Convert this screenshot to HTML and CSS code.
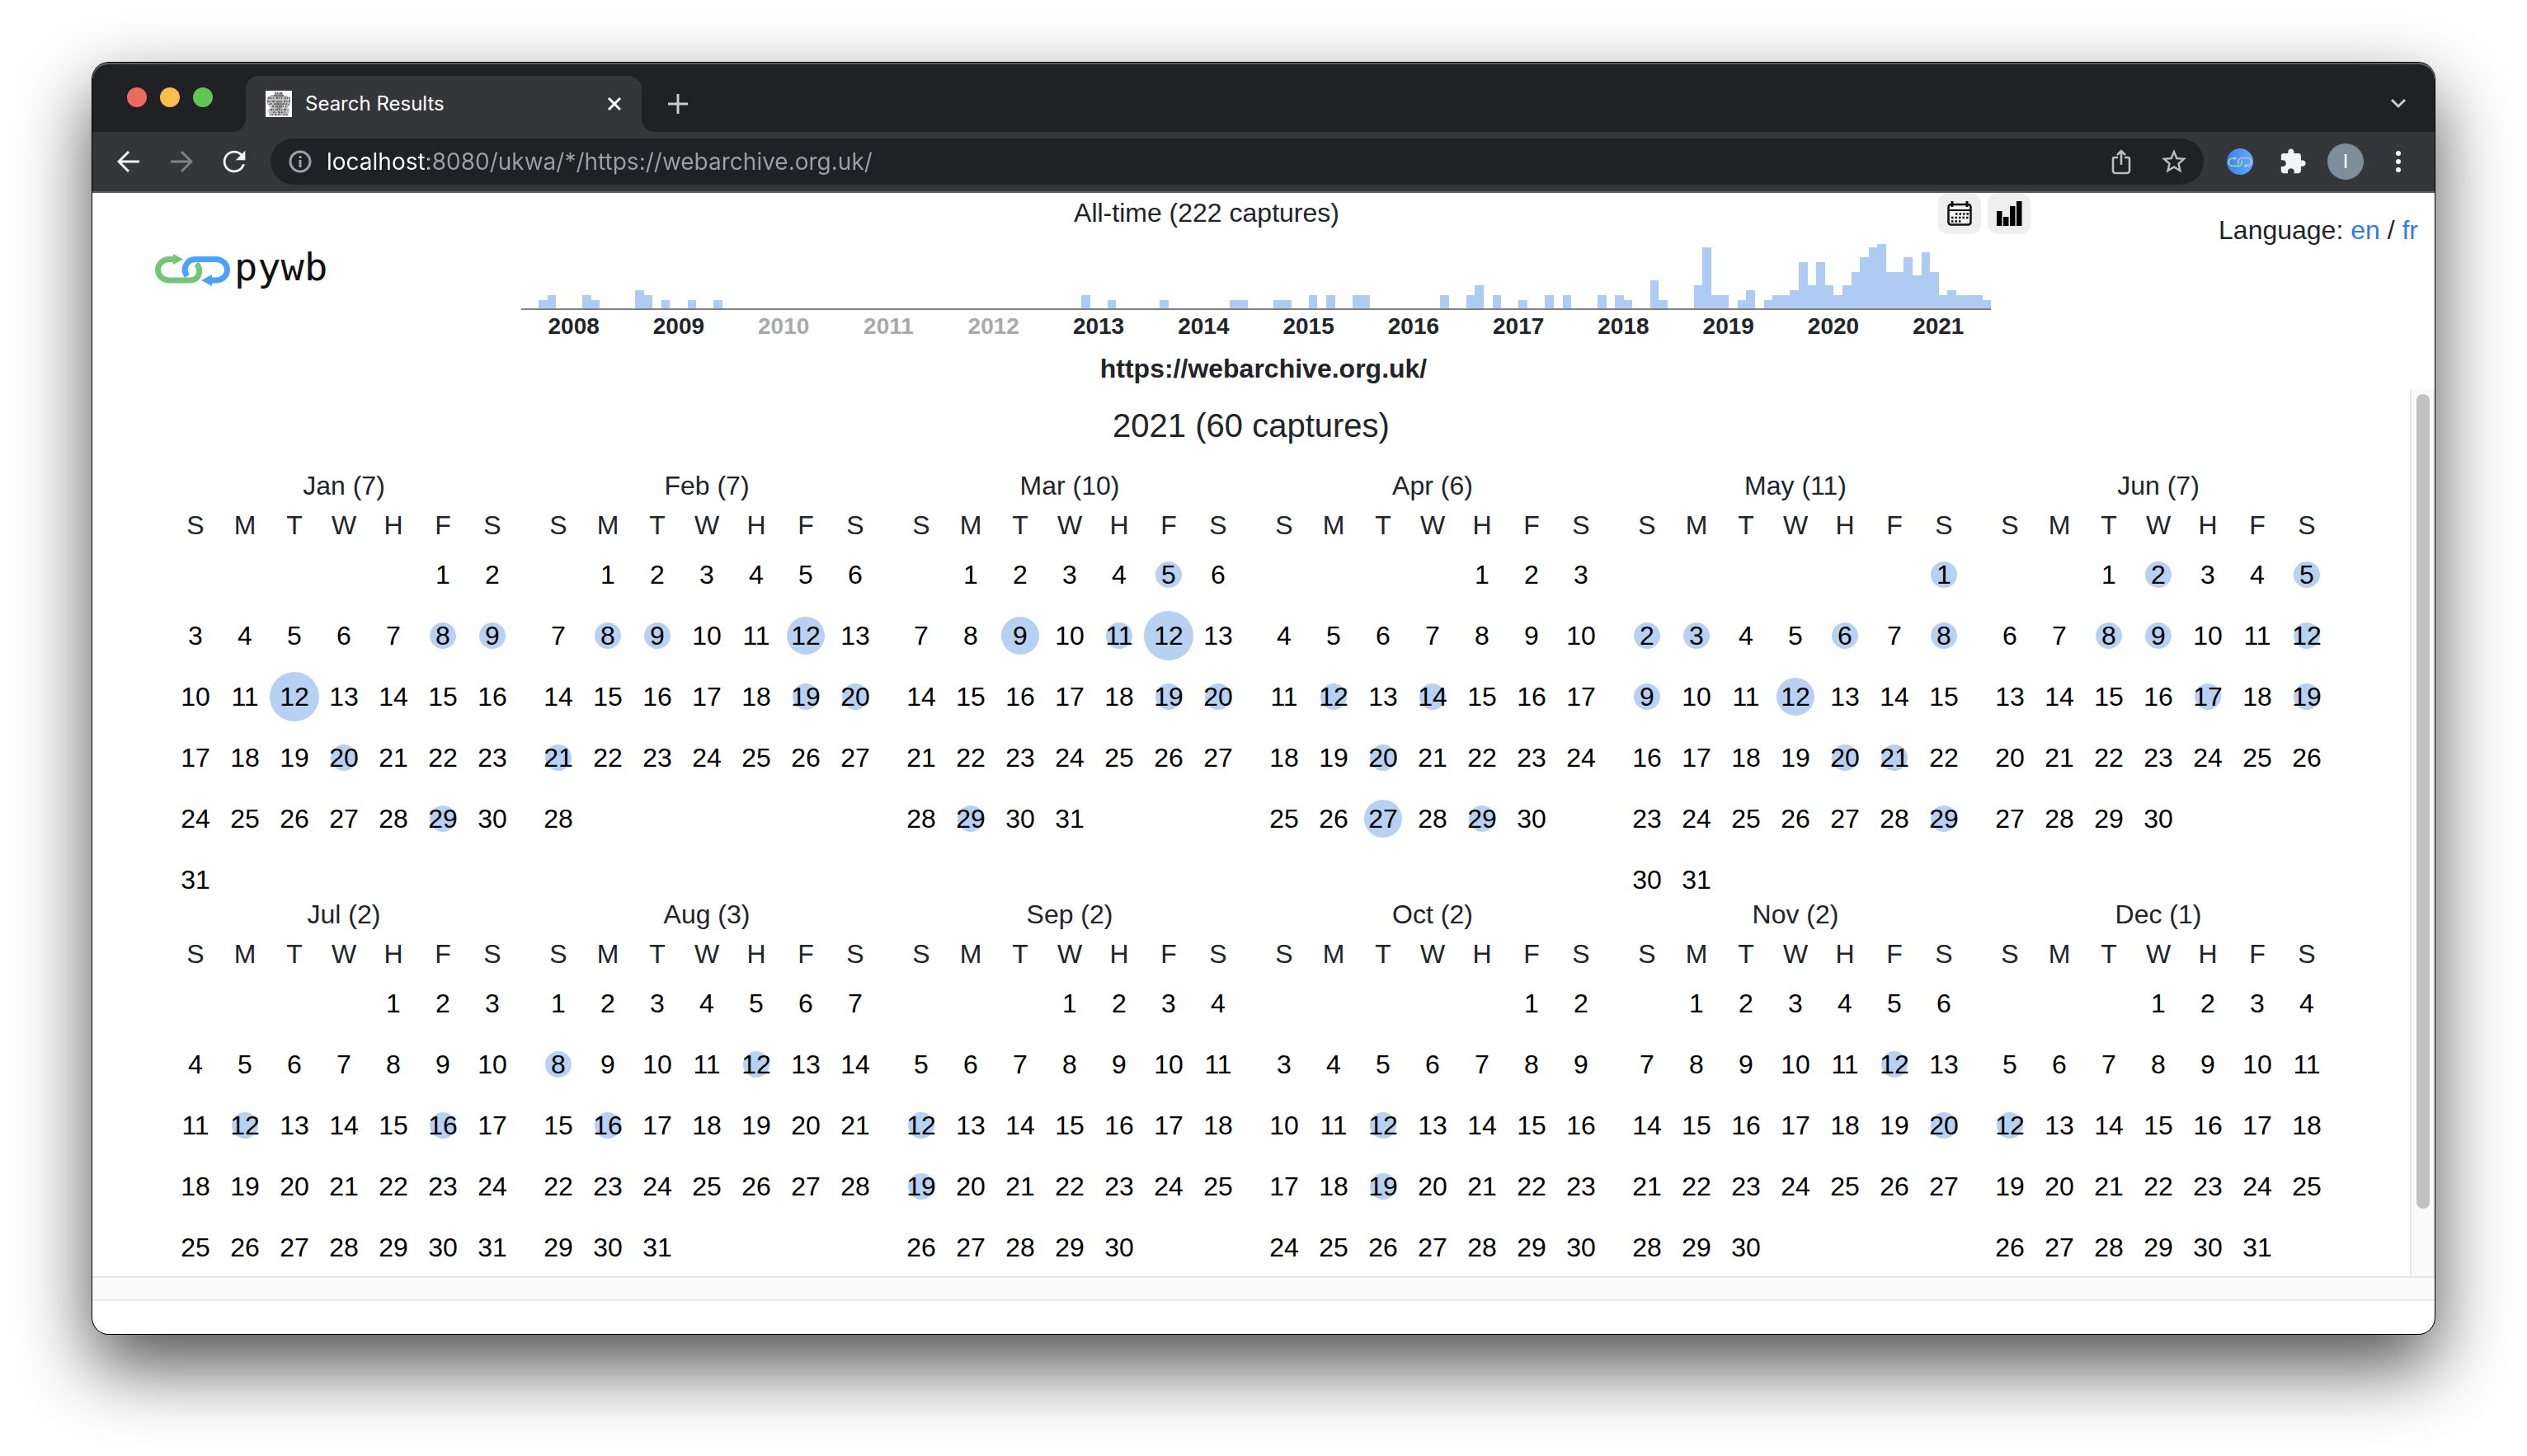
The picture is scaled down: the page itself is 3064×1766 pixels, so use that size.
FILE: index.html
```html
<!DOCTYPE html>
<html lang="en">
<head>
<meta charset="utf-8">
<title>Search Results</title>
<link rel="stylesheet" href="styles.css">
</head>
<body>
<div class="window">
  <header class="tabstrip">
    <div class="lights">
      <button class="light light-close" aria-label="Close window"></button>
      <button class="light light-min" aria-label="Minimise window"></button>
      <button class="light light-max" aria-label="Zoom window"></button>
    </div>
    <div class="tab">
      <svg class="favicon" viewBox="0 0 32 32" aria-hidden="true">
        <rect width="32" height="32" fill="#fff"/>
        <path fill="#b4b4b4" d="M11 2h10v4h5l4 3v8l-3 3 2 4-2 6H5l-2-6 3-4-4-4V8l5-3h4z"/>
        <g stroke="#666" stroke-width="2" stroke-dasharray="2 1 1 2 3 1" fill="none">
          <path d="M11 3h10M10 6h12M3 9h7M13 9h7M23 9h7M2 13h9M22 13h8M4 16h24M8 19h17M6 23h20M9 26h15M5 29h23"/>
        </g>
        <g stroke="#eee" stroke-width="1" stroke-dasharray="2 3 1 2" fill="none">
          <path d="M4 11h25M3 15h26M6 18h21M5 21h23M4 25h24M5 28h22"/>
        </g>
        <path fill="#777" d="M12 4h8v4h-8zM12 12h8v8l-4 3-4-3z" opacity=".7"/>
      </svg>
      <span class="tab-title">Search Results</span>
      <button class="icon-btn tab-close" aria-label="Close tab">
        <svg width="18" height="18" viewBox="0 0 18 18"><path d="M2 2l14 14M16 2L2 16" stroke="#fff" stroke-width="3"/></svg>
      </button>
    </div>
    <button class="icon-btn new-tab" aria-label="New tab">
      <svg width="26" height="26" viewBox="0 0 26 26"><path d="M13 1v24M1 13h24" stroke="#c8cacd" stroke-width="3"/></svg>
    </button>
    <button class="icon-btn tab-search" aria-label="Search tabs">
      <svg width="20" height="14" viewBox="0 0 20 14"><path d="M2 2l8 8 8-8" fill="none" stroke="#c8cacd" stroke-width="3"/></svg>
    </button>
  </header>

  <nav class="toolbar" aria-label="Browser toolbar">
    <button class="icon-btn" aria-label="Back">
      <svg width="28" height="28" viewBox="0 0 28 28"><path d="M27 14H3M14 2L2 14l12 12" fill="none" stroke="#f1f3f4" stroke-width="3"/></svg>
    </button>
    <button class="icon-btn" aria-label="Forward">
      <svg width="28" height="28" viewBox="0 0 28 28"><path d="M1 14h24M14 2l12 12-12 12" fill="none" stroke="#808185" stroke-width="3"/></svg>
    </button>
    <button class="icon-btn" aria-label="Reload">
      <svg width="40" height="40" viewBox="0 0 24 24"><path fill="#f1f3f4" d="M17.65 6.35C16.2 4.9 14.21 4 12 4c-4.42 0-7.99 3.58-7.99 8s3.57 8 7.99 8c3.73 0 6.84-2.55 7.73-6h-1.9c-.82 2.6-3.04 4.3-5.83 4.3-3.5 0-6.3-2.8-6.3-6.3s2.8-6.3 6.3-6.3c1.75 0 3.3.7 4.4 1.88L13 11h7V4z"/></svg>
    </button>
    <div class="omnibox">
      <svg class="info" viewBox="0 0 28 28" aria-hidden="true">
        <circle cx="14" cy="14" r="12" fill="none" stroke="#9aa0a6" stroke-width="3"/>
        <path d="M14 12v9M14 7v3" stroke="#9aa0a6" stroke-width="3"/>
      </svg>
      <input class="address" type="text" aria-label="Address" value="localhost:8080/ukwa/*/https://webarchive.org.uk/">
      <button class="icon-btn" aria-label="Share">
        <svg width="24" height="32" viewBox="0 0 24 32"><path d="M8 11H4a2 2 0 0 0-2 2v14a3 3 0 0 0 3 3h14a3 3 0 0 0 3-3V13a2 2 0 0 0-2-2h-4M12 20V4M7 8l5-5 5 5" fill="none" stroke="#bdbdbd" stroke-width="2.6"/></svg>
      </button>
      <button class="icon-btn" aria-label="Bookmark">
        <svg width="36" height="36" viewBox="0 0 24 24"><path fill="#bdbdbd" d="M22 9.24l-7.19-.62L12 2 9.19 8.63 2 9.24l5.46 4.73L5.82 21 12 17.27 18.18 21l-1.63-7.03L22 9.24zM12 15.4l-3.76 2.27 1-4.28-3.32-2.88 4.38-.38L12 6.1l1.71 4.04 4.38.38-3.32 2.88 1 4.28L12 15.4z"/></svg>
      </button>
    </div>
    <button class="icon-btn" aria-label="Web archive extension">
      <svg width="32" height="32" viewBox="0 0 32 32">
        <defs><linearGradient id="ext"><stop offset="0" stop-color="#4a78ee"/><stop offset="1" stop-color="#4fb8f8"/></linearGradient></defs>
        <circle cx="16" cy="16" r="16" fill="url(#ext)"/>
        <g fill="none" stroke-width="1.7">
          <path stroke="#f0a4f0" d="M14.500 19a5 5 0 0 1 3.500-7.500h7a4.700 4.700 0 0 1 0 9.400h-2"/>
          <path stroke="#86e88c" d="M10 12H7a4.700 4.700 0 0 0 0 9.400h7.500a4.700 4.700 0 0 0 3-7.500"/>
        </g>
        <path fill="#86e88c" d="M8.500 9.500l4 2.500-4 2.500z"/><path fill="#f0a4f0" d="M24 18.500l-4 2.500 4 2.500z"/>
      </svg>
    </button>
    <button class="icon-btn" aria-label="Extensions">
      <svg width="34" height="34" viewBox="0 0 24 24"><path fill="#f1f3f4" d="M20.500 11H19V7c0-1.100-.9-2-2-2h-4V3.500C13 2.120 11.880 1 10.500 1S8 2.120 8 3.500V5H4c-1.100 0-1.990.9-1.990 2v3.800H3.500c1.490 0 2.700 1.210 2.700 2.700s-1.210 2.700-2.700 2.700H2V20c0 1.100.9 2 2 2h3.800v-1.500c0-1.490 1.210-2.700 2.700-2.700 1.490 0 2.700 1.210 2.700 2.700V22H17c1.100 0 2-.9 2-2v-4h1.500c1.380 0 2.500-1.120 2.500-2.500S21.880 11 20.500 11z"/></svg>
    </button>
    <button class="icon-btn" aria-label="Profile"><span class="avatar">I</span></button>
    <button class="icon-btn" aria-label="Menu">
      <svg width="8" height="28" viewBox="0 0 8 28"><g fill="#f1f3f4"><circle cx="4" cy="4" r="3"/><circle cx="4" cy="14" r="3"/><circle cx="4" cy="24" r="3"/></g></svg>
    </button>
  </nav>

  <main class="page">
    <section class="banner">
      <a class="logo" href="#">
        <svg width="92" height="40" viewBox="0 0 92 40" aria-hidden="true">
          <g fill="none" stroke-width="7">
            <path stroke="#4ca2fb" d="M39 27C33 19 37 6.500 50 6.500h24a13.500 12.700 0 0 1 0 25.400h-8"/>
            <path stroke="#74c47a" d="M50 12C57 19 54 32 42 32H17a13.500 12.700 0 0 1 0-25.400h8"/>
          </g>
          <path fill="#74c47a" d="M22 0l12 6.500-12 6.500z"/>
          <path fill="#4ca2fb" d="M69 25l-13 7 13 7z"/>
        </svg>
        <span class="logo-text">pywb</span>
      </a>
      <div class="timeline">
        <div class="timeline-head">
          <h2 class="timeline-title">All-time (222 captures)</h2>
          <div class="view-switch">
            <button class="view-btn" aria-label="Show calendar">
              <svg width="30" height="30" viewBox="0 0 30 30">
                <rect x="1.500" y="4" width="27" height="24.500" rx="3" fill="none" stroke="#111" stroke-width="2.500"/>
                <path d="M2 11h26" stroke="#111" stroke-width="2"/><path d="M6 0v7M24 0v7" stroke="#111" stroke-width="3"/>
                <path d="M10 15.500h16M5 20h21M5 24.500h12" stroke="#111" stroke-width="2.500" stroke-dasharray="2.500 2"/>
              </svg>
            </button>
            <button class="view-btn" aria-label="Show timeline">
              <svg width="32" height="32" viewBox="0 0 32 32"><path d="M1 13h6.500v18H1zM9 20h6.500v11H9zM17 7h6.500v24H17zM25 1h6.500v30H25z"/></svg>
            </button>
          </div>
        </div>
        <div class="chart">
          <div class="bars" id="bars"></div>
          <div class="years" id="years"></div>
        </div>
      </div>
      <p class="language">Language: <a href="#en">en</a> / <a href="#fr">fr</a></p>
    </section>
    <h1 class="url">https://webarchive.org.uk/</h1>
    <section class="viewport">
      <div class="calendar">
        <h2 class="year-title">2021 (60 captures)</h2>
        <div class="months" id="months"></div>
      </div>
      <div class="vbar"><div class="thumb"></div></div>
      <div class="hbar"></div>
    </section>
  </main>
</div>
<script src="calendar.js"></script>
</body>
</html>
```
FILE: calendar.js
```
// Bar heights in pixels, keyed by the month's index since January 2008.
const heights = {
  2: 10, 3: 16, 7: 16, 8: 10, 13: 22, 14: 16, 16: 10, 19: 10, 22: 10,
  64: 16, 67: 10, 73: 10, 81: 10, 82: 10, 86: 10, 87: 10, 90: 16, 92: 16,
  95: 16, 96: 16, 105: 16, 108: 16, 109: 28, 111: 16, 114: 10, 117: 16,
  119: 16, 123: 16, 125: 16, 126: 10, 129: 34, 130: 10, 134: 28, 135: 74,
  136: 16, 137: 16, 139: 10, 140: 22, 142: 10, 143: 16, 144: 16, 145: 22,
  146: 56, 147: 28, 148: 56, 149: 28, 150: 16, 151: 28, 152: 44, 153: 62,
  154: 74, 155: 78, 156: 44, 157: 44, 158: 62, 159: 40, 160: 68, 161: 44,
  162: 16, 163: 22, 164: 16, 165: 16, 166: 16, 167: 10
};
const emptyYears = [2010, 2011, 2012];

let bars = '';
for (let i = 0; i < 168; i++) {
  bars += `<span class="bar" style="height:${heights[i] || 0}px"></span>`;
}
document.getElementById('bars').innerHTML = bars;

let years = '';
for (let y = 2008; y <= 2021; y++) {
  years += `<span class="year${emptyYears.includes(y) ? ' empty' : ''}">${y}</span>`;
}
document.getElementById('years').innerHTML = years;

// Month name, number of captures, and the days that have captures by dot size.
const months = [
  ['Jan', 7, { s: [8, 9, 20, 29], l: [12] }],
  ['Feb', 7, { s: [8, 9, 19, 20, 21], m: [12] }],
  ['Mar', 10, { s: [5, 11, 19, 20, 29], m: [9], l: [12] }],
  ['Apr', 6, { s: [12, 14, 20, 29], m: [27] }],
  ['May', 11, { s: [1, 2, 3, 6, 8, 9, 20, 21, 29], m: [12] }],
  ['Jun', 7, { s: [2, 5, 8, 9, 12, 17, 19] }],
  ['Jul', 2, { s: [12, 16] }],
  ['Aug', 3, { s: [8, 12, 16] }],
  ['Sep', 2, { s: [12, 19] }],
  ['Oct', 2, { s: [12, 19] }],
  ['Nov', 2, { s: [12, 20] }],
  ['Dec', 1, { s: [12] }]
];

document.getElementById('months').innerHTML = months.map(([name, count, dots], m) => {
  const first = new Date(2021, m, 1).getDay();
  const last = new Date(2021, m + 1, 0).getDate();
  const weeks = Math.ceil((first + last) / 7);
  let rows = '';
  for (let r = 0; r < weeks; r++) {
    rows += '<tr>';
    for (let c = 0; c < 7; c++) {
      const day = r * 7 + c - first + 1;
      if (day < 1 || day > last) { rows += '<td></td>'; continue; }
      const size = Object.keys(dots).find(k => dots[k].includes(day));
      rows += `<td><span class="day${size ? ' dot-' + size : ''}">${day}</span></td>`;
    }
    rows += '</tr>';
  }
  const head = [...'SMTWHFS'].map(d => `<th scope="col">${d}</th>`).join('');
  return `<table class="month"><caption>${name} (${count})</caption><thead><tr>${head}</tr></thead><tbody>${rows}</tbody></table>`;
}).join('');
```
FILE: styles.css
```css
* {
  box-sizing: border-box;
}

body {
  margin: 0;
  padding: 76px 112px 148px;
  min-height: 100vh;
  display: flex;
  flex-direction: column;
  background: #fff;
  color: #212529;
  font: 32px/36px "Liberation Sans", Arial, sans-serif;
}

h1, h2, p {
  margin: 0;
  font-size: 32px;
  font-weight: 400;
}

button {
  border: 0;
  padding: 0;
  background: none;
  color: inherit;
  font: inherit;
}

svg {
  display: block;
}

a {
  color: #3478f6;
  text-decoration: none;
}

.window {
  flex: 1;
  display: flex;
  flex-direction: column;
  border-radius: 20px;
  overflow: hidden;
  background: #fff;
  box-shadow: 0 0 0 1px #000, 0 38px 90px rgba(0, 0, 0, 0.7);
}

/* Browser frame */

.tabstrip {
  display: flex;
  align-items: flex-end;
  height: 84px;
  padding: 0 12px 0 42px;
  background: #202124;
  box-shadow: inset 0 2px 0 #5d5e60;
  border-radius: 20px 20px 0 0;
}

.lights {
  display: flex;
  align-items: center;
  gap: 16px;
  height: 84px;
  margin-right: 40px;
}

.light {
  width: 24px;
  height: 24px;
  border-radius: 50%;
}

.light-close { background: #ed6a5e; }
.light-min { background: #f5bf4f; }
.light-max { background: #61c554; }

.tab {
  position: relative;
  display: flex;
  align-items: center;
  gap: 16px;
  width: 480px;
  height: 68px;
  padding: 0 24px;
  border-radius: 16px 16px 0 0;
  background: #35363a;
}

.tab::before,
.tab::after {
  content: "";
  position: absolute;
  bottom: 0;
  width: 16px;
  height: 16px;
}

.tab::before {
  left: -16px;
  background: radial-gradient(circle at 0 0, transparent 16px, #35363a 16px);
}

.tab::after {
  right: -16px;
  background: radial-gradient(circle at 100% 0, transparent 16px, #35363a 16px);
}

.favicon {
  width: 32px;
  height: 32px;
}

.tab-title {
  flex: 1;
  color: #fff;
  font: 24px/32px Inter, sans-serif;
}

.icon-btn {
  display: flex;
  flex: none;
  align-items: center;
  justify-content: center;
  width: 64px;
  height: 56px;
}

.tab-close {
  width: 18px;
}

.new-tab {
  width: 56px;
  height: 68px;
  margin-left: 16px;
}

.tab-search {
  height: 68px;
  margin-left: auto;
}

.toolbar {
  display: flex;
  align-items: center;
  height: 74px;
  padding: 0 12px;
  border-bottom: 2px solid #5f6063;
  background: #35363a;
}

.omnibox {
  flex: 1;
  display: flex;
  align-items: center;
  height: 56px;
  margin: 0 12px;
  padding: 0 4px 0 22px;
  border-radius: 28px;
  background: #202124;
}

.info {
  width: 28px;
  height: 28px;
  margin-right: 18px;
}

.address {
  flex: 1;
  min-width: 0;
  padding: 0;
  border: 0;
  outline: 0;
  background: linear-gradient(to right, #fff 123px, #9aa0a6 123px);
  -webkit-background-clip: text;
  background-clip: text;
  color: transparent;
  font: 28px/40px Inter, sans-serif;
}

.avatar {
  width: 44px;
  height: 44px;
  border-radius: 50%;
  background: #7b8e9a;
  color: #fff;
  font: 24px/44px Roboto, sans-serif;
}

/* Archive page */

.page {
  flex: 1;
  display: flex;
  flex-direction: column;
  padding-bottom: 40px;
}

.banner {
  display: grid;
  grid-template-columns: 352px 1fr 490px;
}

.logo {
  display: flex;
  align-items: flex-start;
  gap: 4px;
  padding: 74px 0 0 76px;
}

.logo-text {
  color: #111;
  font: 47px/32px "DejaVu Sans Mono", monospace;
}

.timeline-head {
  display: grid;
  grid-template-columns: 1fr auto 1fr;
  height: 50px;
}

.timeline-title {
  grid-column: 2;
  line-height: 48px;
}

.view-switch {
  display: flex;
  justify-content: flex-end;
  gap: 8px;
}

.view-btn {
  display: flex;
  align-items: center;
  justify-content: center;
  width: 52px;
  height: 50px;
  border-radius: 12px;
  background: #efefef;
}

.chart {
  padding: 0 48px 0 168px;
}

.bars {
  display: flex;
  align-items: flex-end;
  height: 92px;
  border-bottom: 2px solid #808080;
}

.bar {
  flex: 1;
  background: #aecbf2;
}

.years {
  display: flex;
  font-size: 28px;
  font-weight: 700;
  line-height: 40px;
  text-align: center;
}

.year {
  flex: 1;
}

.year.empty {
  color: #a9a9a9;
}

.language {
  padding: 27px 20px 0 0;
  text-align: right;
}

.url {
  padding-top: 6px;
  font-weight: 700;
  line-height: 50px;
  text-align: center;
}

.viewport {
  flex: 1;
  display: grid;
  grid-template-columns: 1fr 30px;
  grid-template-rows: 1fr 30px;
}

/* Scrolls inside the space that the window leaves */
.calendar {
  height: 0;
  min-height: 100%;
  padding-top: 20px;
  overflow-y: auto;
  scrollbar-width: none;
}

.year-title {
  margin-bottom: 32px;
  font-size: 40px;
  line-height: 48px;
  text-align: center;
}

.months {
  display: grid;
  grid-template-columns: repeat(auto-fit, 440px);
  justify-content: center;
  justify-items: center;
  align-items: start;
}

.month {
  width: 420px;
  table-layout: fixed;
  border-collapse: collapse;
  text-align: center;
}

.month caption {
  padding-bottom: 20px;
  line-height: 34px;
}

.month th {
  padding: 0;
  font-weight: 400;
  line-height: 22px;
}

.month td {
  height: 74px;
  padding: 31px 0 7px;
  color: #000;
}

.day {
  position: relative;
  z-index: 0;
  display: block;
}

.dot-s::before,
.dot-m::before,
.dot-l::before {
  content: "";
  position: absolute;
  z-index: -1;
  top: 50%;
  left: 50%;
  width: 32px;
  height: 32px;
  border-radius: 50%;
  background: #b8d1f3;
  transform: translate(-50%, -50%);
}

.dot-m::before {
  width: 46px;
  height: 46px;
}

.dot-l::before {
  width: 60px;
  height: 60px;
}

.vbar {
  padding: 6px 4px 82px 6px;
  border-left: 2px solid #e8e8e8;
  border-right: 2px solid #f0f0f0;
  background: #fafafa;
}

.thumb {
  width: 16px;
  height: 100%;
  border-radius: 8px;
  background: #c1c1c1;
}

.hbar {
  grid-column: 1 / 3;
  border-top: 2px solid #e8e8e8;
  border-bottom: 2px solid #ededed;
  background: #fafafa;
}
```
